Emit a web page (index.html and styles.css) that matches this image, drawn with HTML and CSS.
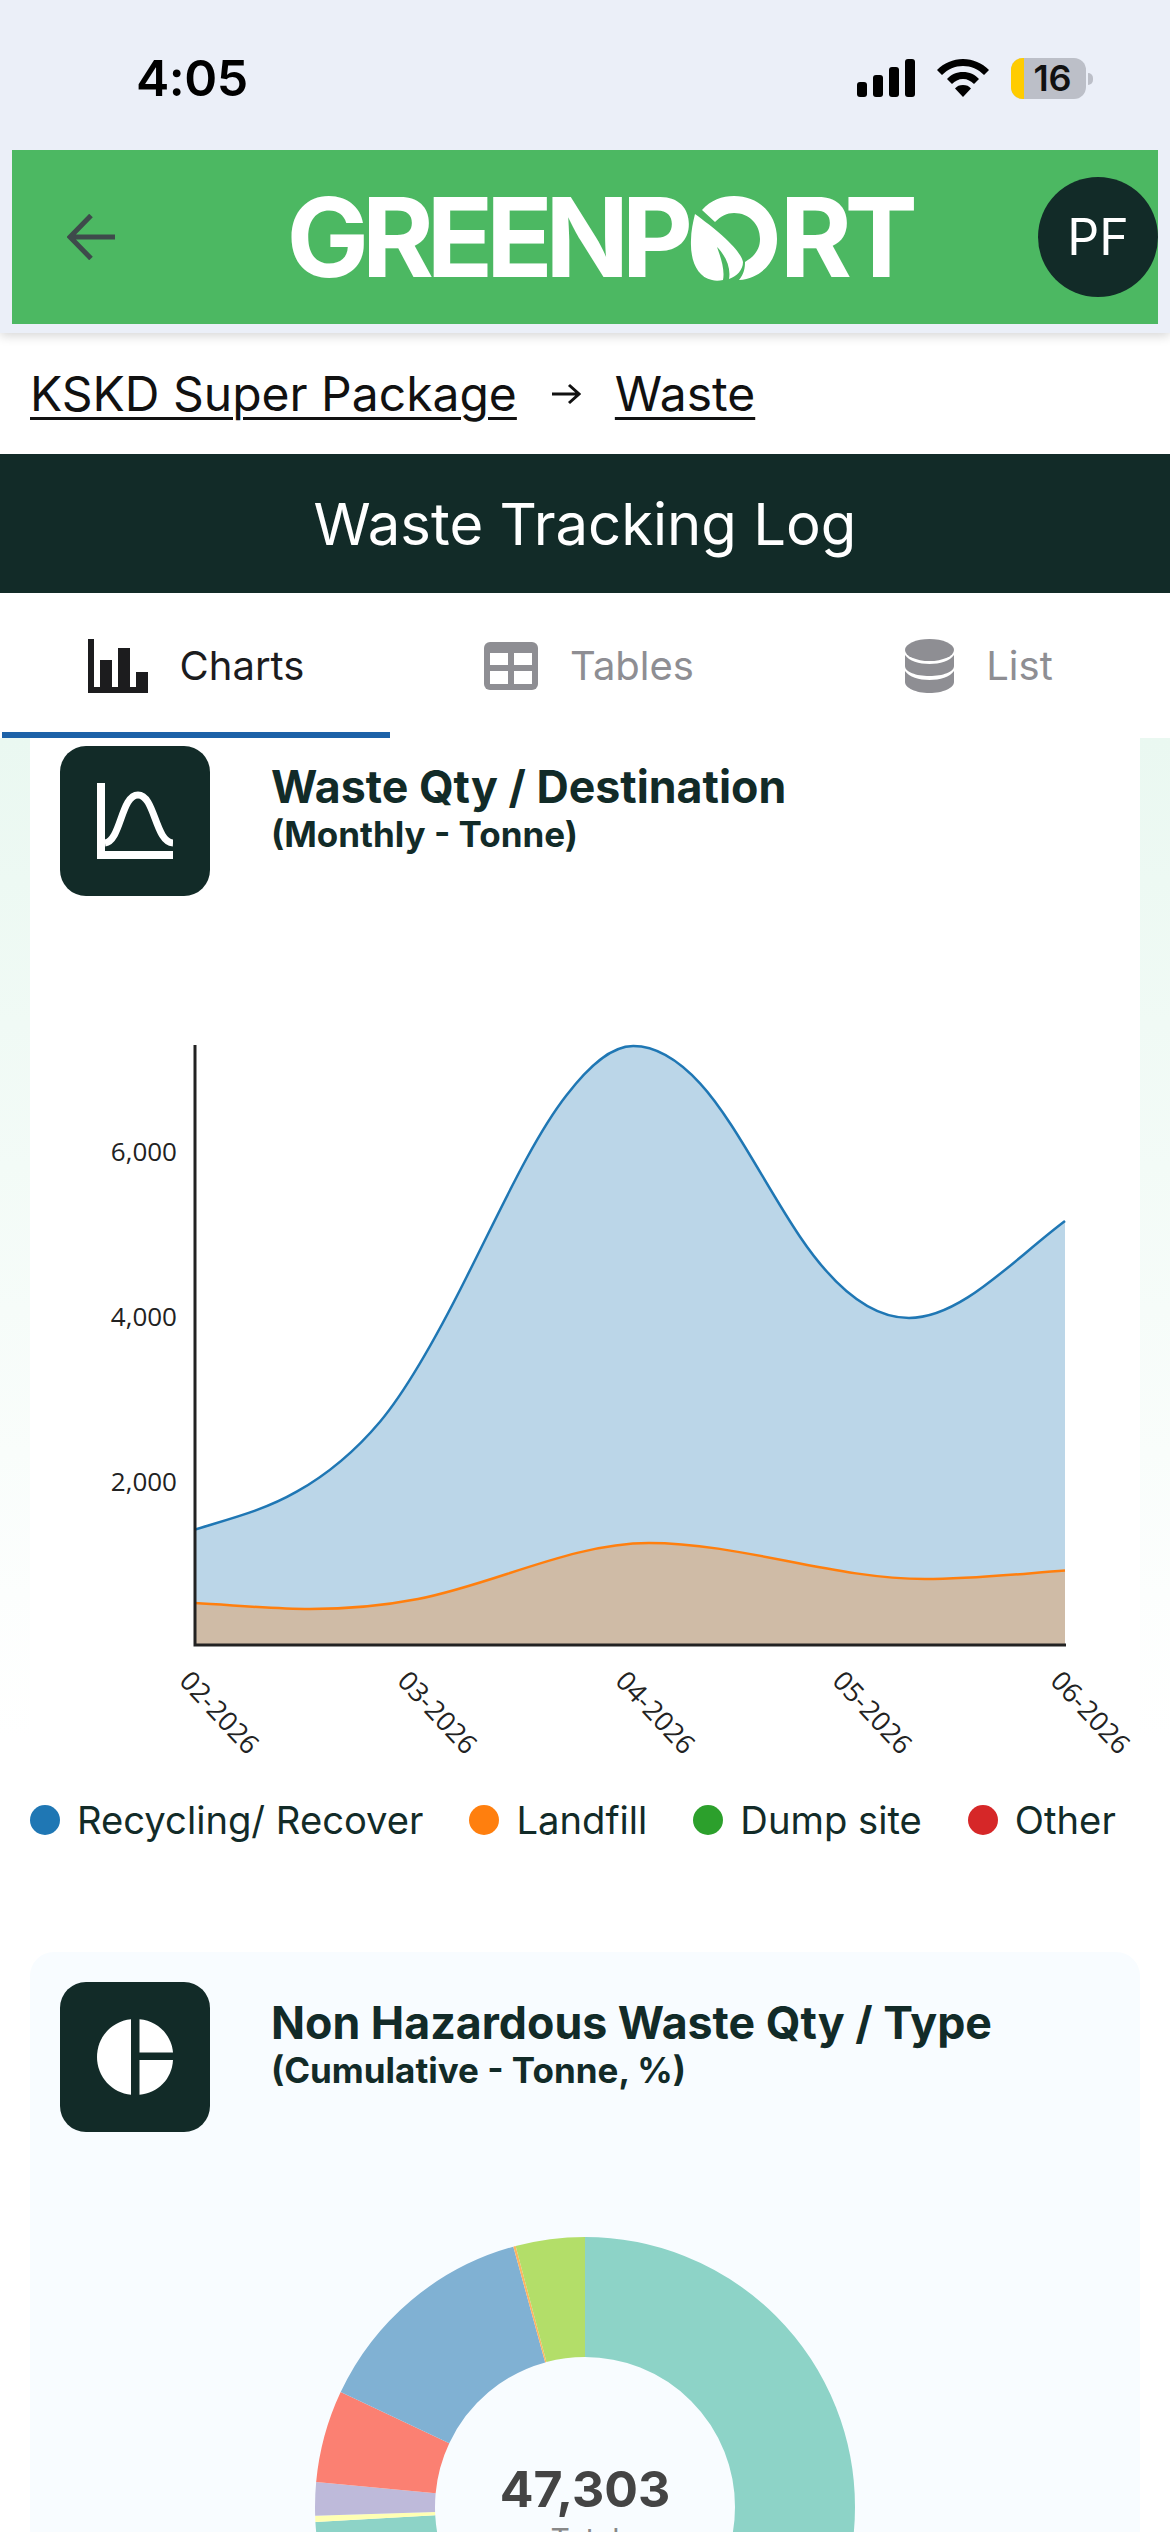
FILE: index.html
```html
<!DOCTYPE html>
<html lang="en">
<head>
<meta charset="utf-8">
<title>Waste Tracking Log</title>
<link rel="stylesheet" href="styles.css">
</head>
<body>
<header class="top">
  <div class="status">
    <span class="time">4:05</span>
    <div class="status-icons">
      <svg class="signal" width="58" height="38" viewBox="0 0 58 38"><rect x="0" y="23" width="10" height="15" rx="3"/><rect x="16" y="16" width="10" height="22" rx="3"/><rect x="32" y="8" width="10" height="30" rx="3"/><rect x="48" y="0" width="10" height="38" rx="3"/></svg>
      <svg class="wifi" width="52" height="38" viewBox="0 0 52 38"><path d="M26 0C16 0 7 4 0 11l5 5C11 10 18 7 26 7s15 3 21 9l5-5C45 4 36 0 26 0z"/><path d="M26 13c-6.500 0-12 2.500-16 7l5 5c3-3 6.500-5 11-5s8 2 11 5l5-5c-4-4.500-9.500-7-16-7z"/><path d="M26 26c-3.500 0-6 1-8 3.500L26 38l8-8.500C32 27 29.500 26 26 26z"/></svg>
      <div class="battery"><span class="battery-level"></span><span class="battery-num">16</span><span class="battery-nub"></span></div>
    </div>
  </div>
  <div class="brand">
    <svg class="back" width="48" height="46" viewBox="0 0 48 46"><path d="M48 23H5M24 1.500 3 23l21 21.500" fill="none" stroke="#3E4A4B" stroke-width="5"/></svg>
    <div class="logo">
      <span>GREENP</span>
      <svg class="logo-o" width="90" height="90" viewBox="695 190 90 90"><path fill="#fff" d="M709 208C718 198 729 194 741 194 766 194 784 212 784 237 784 258 770 276 746 278 751 272 752 266 752 260 762 254 767 247 767 237 767 222 756 211 741 211 734 211 728 214 722 220z"/><path fill="#fff" d="M702 212C724 228 748 248 750 260 750 268 744 274 736 277 738 266 733 254 724 245 728 256 732 268 730 278 726 279 722 279 719 278 704 275 697 258 698 238 698 229 700 220 702 212z"/></svg>
      <span>RT</span>
    </div>
    <div class="avatar">PF</div>
  </div>
</header>

<nav class="crumbs">
  <a class="crumb">KSKD Super Package</a>
  <svg class="crumb-arrow" width="30" height="22" viewBox="0 0 30 22"><path d="M1 11h27M18 2l10 9-10 9" fill="none" stroke="#111" stroke-width="3"/></svg>
  <a class="crumb">Waste</a>
</nav>

<h1 class="page-title">Waste Tracking Log</h1>

<div class="tabs">
  <div class="tab tab-active">
    <svg width="60" height="54" viewBox="0 0 60 54" fill="#1C1C1E"><path d="M0 0h6v48h6V21h12v27h6V9h12v39h6V33h12v21H0z"/></svg>
    <span>Charts</span>
  </div>
  <div class="tab">
    <svg width="54" height="48" viewBox="0 0 54 48"><rect width="54" height="48" rx="6" fill="#8E8E93"/><g fill="#fff"><rect x="6" y="11" width="18" height="12"/><rect x="30" y="11" width="18" height="12"/><rect x="6" y="29" width="18" height="13"/><rect x="30" y="29" width="18" height="13"/></g></svg>
    <span>Tables</span>
  </div>
  <div class="tab">
    <svg width="49" height="54" viewBox="0 0 49 54" fill="#8E8E93"><ellipse cx="24.500" cy="11" rx="24.500" ry="11"/><path d="M0 16c4 6 14 9 24.500 9S45 22 49 16v11c0 6-11 10-24.500 10S0 33 0 27z"/><path d="M0 32c4 6 14 9 24.500 9S45 38 49 32v11c0 6-11 11-24.500 11S0 49 0 43z"/></svg>
    <span>List</span>
  </div>
</div>

<main class="content">
  <section class="card card-plain">
    <div class="card-head">
      <div class="card-icon">
        <svg width="76" height="76" viewBox="0 0 76 76"><path d="M4 0v72h72" fill="none" stroke="#fff" stroke-width="8"/><path d="M8 60C24 58 24 12 41 12C58 12 58 59 76 60" fill="none" stroke="#fff" stroke-width="7"/></svg>
      </div>
      <div class="card-text">
        <h2>Waste Qty / Destination</h2>
        <p>(Monthly - Tonne)</p>
      </div>
    </div>
    <svg class="area-chart" width="1110" height="874" viewBox="30 896 1110 874">
      <path class="area-blue" d="M195 1529.500C229 1519 263 1511 296.700 1491.700C324.500 1476 352 1455 380 1421.700C409 1387 438 1334 466.700 1276.700C500 1211 533 1138 566.700 1095C589 1066 611 1046 633.300 1046C655.500 1046 678 1059.500 700 1083.300C733 1119 767 1188 800 1236.700C836 1290 873 1318 909 1318C961 1318 1013 1260 1065 1221V1645H195z"/>
      <path class="line-blue" d="M195 1529.500C229 1519 263 1511 296.700 1491.700C324.500 1476 352 1455 380 1421.700C409 1387 438 1334 466.700 1276.700C500 1211 533 1138 566.700 1095C589 1066 611 1046 633.300 1046C655.500 1046 678 1059.500 700 1083.300C733 1119 767 1188 800 1236.700C836 1290 873 1318 909 1318C961 1318 1013 1260 1065 1221"/>
      <path class="area-orange" d="M195 1603C233 1605 272 1609 310 1609C346 1609 382 1606 418 1599C495 1584 572 1543 649 1543C741 1543 833 1579 925 1579C972 1579 1018 1574 1065 1570.500V1645H195z"/>
      <path class="line-orange" d="M195 1603C233 1605 272 1609 310 1609C346 1609 382 1606 418 1599C495 1584 572 1543 649 1543C741 1543 833 1579 925 1579C972 1579 1018 1574 1065 1570.500"/>
      <path class="axis" d="M195 1045V1645H1066"/>
      <g class="tick-y">
        <text x="177" y="1161">6,000</text>
        <text x="177" y="1326">4,000</text>
        <text x="177" y="1491">2,000</text>
      </g>
      <g class="tick-x">
        <text transform="translate(178 1682) rotate(47)">02-2026</text>
        <text transform="translate(396 1682) rotate(47)">03-2026</text>
        <text transform="translate(614 1682) rotate(47)">04-2026</text>
        <text transform="translate(831 1682) rotate(47)">05-2026</text>
        <text transform="translate(1049 1682) rotate(47)">06-2026</text>
      </g>
    </svg>
  </section>

  <ul class="legend">
    <li><i class="dot dot-blue"></i>Recycling/ Recover</li>
    <li><i class="dot dot-orange"></i>Landfill</li>
    <li><i class="dot dot-green"></i>Dump site</li>
    <li><i class="dot dot-red"></i>Other</li>
  </ul>

  <section class="card card-tint">
    <div class="card-head">
      <div class="card-icon">
        <svg width="76" height="76" viewBox="0 0 76 76" fill="#fff"><path d="M34 .3V75.700C15 74 0 58 0 38S15 2 34 .3z"/><path d="M42.500 .3C61 2 74.500 16 76 33.500H42.500z"/><path d="M42.500 41H76C75 60 61 74 42.500 75.700z"/></svg>
      </div>
      <div class="card-text">
        <h2>Non Hazardous Waste Qty / Type</h2>
        <p>(Cumulative - Tonne, %)</p>
      </div>
    </div>
    <svg class="donut" width="1110" height="420" viewBox="30 2132 1110 420">
      <g class="donut-ring" transform="rotate(-90 585 2507)">
        <circle class="seg" cx="585" cy="2507" r="210" pathLength="360" stroke="#8DD3C7" stroke-dasharray="266.800 360"/>
        <circle class="seg" cx="585" cy="2507" r="210" pathLength="360" stroke="#FFFFB3" stroke-dasharray="1.300 360" stroke-dashoffset="-266.800"/>
        <circle class="seg" cx="585" cy="2507" r="210" pathLength="360" stroke="#BEBADA" stroke-dasharray="7.200 360" stroke-dashoffset="-268.100"/>
        <circle class="seg" cx="585" cy="2507" r="210" pathLength="360" stroke="#FB8072" stroke-dasharray="19.900 360" stroke-dashoffset="-275.300"/>
        <circle class="seg" cx="585" cy="2507" r="210" pathLength="360" stroke="#80B1D3" stroke-dasharray="49.400 360" stroke-dashoffset="-295.200"/>
        <circle class="seg" cx="585" cy="2507" r="210" pathLength="360" stroke="#FDB462" stroke-dasharray="0.500 360" stroke-dashoffset="-344.600"/>
        <circle class="seg" cx="585" cy="2507" r="210" pathLength="360" stroke="#B3DE69" stroke-dasharray="14.900 360" stroke-dashoffset="-345.100"/>
      </g>
      <text class="donut-value" x="585" y="2507">47,303</text>
      <text class="donut-label" x="585" y="2550">Total</text>
    </svg>
  </section>
</main>
</body>
</html>
```
FILE: styles.css
```css
* { box-sizing: border-box; }
html, body { margin: 0; padding: 0; }
body {
  width: 1170px;
  height: 2532px;
  overflow: hidden;
  background: #fff;
  font-family: "Inter", "Liberation Sans", sans-serif;
  color: #122B28;
}

.top {
  position: relative;
  height: 333px;
  padding: 0 12px;
  background: #EBEFF8;
  box-shadow: 0 3px 10px rgba(0, 0, 0, .16);
}
.status {
  height: 150px;
  display: flex;
  align-items: center;
  justify-content: space-between;
  padding: 6px 72px 0 124px;
}
.time { font-size: 50px; font-weight: 600; color: #000; letter-spacing: -.5px; }
.status-icons { display: flex; align-items: center; gap: 22px; }
.signal, .wifi { display: block; fill: #000; }
.battery {
  position: relative;
  width: 75px;
  height: 41px;
  border-radius: 12px;
  background: #BCBFC8;
  display: flex;
  align-items: center;
  justify-content: center;
}
.battery-level {
  position: absolute;
  left: 0; top: 0; bottom: 0;
  width: 13px;
  background: #FFCC00;
  border-radius: 12px 0 0 12px;
}
.battery-num { position: relative; font-size: 36px; font-weight: 600; color: #111; padding-left: 8px; }
.battery-nub {
  position: absolute;
  right: -7px; top: 15px;
  width: 5px; height: 12px;
  background: #BCBFC8;
  border-radius: 0 6px 6px 0;
}

.brand {
  position: relative;
  height: 174px;
  background: #4CB862;
  display: flex;
  align-items: center;
  justify-content: space-between;
  padding-left: 55px;
}
.back { display: block; }
.logo {
  display: flex;
  align-items: center;
  gap: 2px;
  margin-left: 44px;
  font-family: "Inter", sans-serif;
  font-weight: 700;
  font-size: 110px;
  line-height: 84px;
  letter-spacing: -7.400px;
  color: #fff;
}
.logo-o { display: block; flex: none; }
.avatar {
  width: 120px;
  height: 120px;
  border-radius: 50%;
  background: #122B28;
  color: #fff;
  font-size: 50px;
  display: flex;
  align-items: center;
  justify-content: center;
}

.crumbs {
  height: 121px;
  display: flex;
  align-items: center;
  padding: 0 30px;
  gap: 34px;
  font-size: 48px;
  color: #111;
}
.crumb { text-decoration: underline; text-decoration-thickness: 3px; text-underline-offset: 6px; }
.crumb-arrow { display: block; }

.page-title {
  margin: 0;
  height: 139px;
  background: #122B28;
  color: #fff;
  font-size: 58px;
  font-weight: 400;
  display: flex;
  align-items: center;
  justify-content: center;
}

.tabs { display: grid; grid-template-columns: repeat(3, 390px); height: 145px; }
.tab {
  display: flex;
  align-items: center;
  justify-content: center;
  gap: 32px;
  font-size: 40px;
  color: #8E8E93;
  padding-left: 8px;
}
.tab-active {
  color: #1C1C1E;
  border-bottom: 6px solid #1D62A8;
  margin-left: 2px;
  padding-top: 6px;
  padding-left: 0;
}

.content {
  padding: 0 30px;
  height: 1794px;
  background: linear-gradient(#EAF8F1 0, #FFFFFF 1000px);
}
.card-plain { background: #fff; height: 1032px; padding-top: 8px; }
.card-tint { background: #F8FCFF; border-radius: 24px; margin-top: 85px; padding-top: 30px; }
.card-head { display: flex; gap: 61px; margin-left: 30px; height: 150px; }
.card-icon {
  width: 150px;
  height: 150px;
  border-radius: 26px;
  background: #122B28;
  display: flex;
  align-items: center;
  justify-content: center;
  flex: none;
}
.card-text { padding-top: 13px; }
.card-text h2 { margin: 0; font-size: 44.700px; line-height: 56px; font-weight: 700; color: #122B28; }
.card-text p { margin: 0; font-size: 35px; line-height: 38px; font-weight: 700; color: #122B28; }

.area-chart, .donut { display: block; }
.area-blue { fill: #1F77B4; fill-opacity: .3; }
.area-orange { fill: #FF7F0E; fill-opacity: .3; }
.line-blue { fill: none; stroke: #1F77B4; stroke-width: 2.500; }
.line-orange { fill: none; stroke: #FF7F0E; stroke-width: 2.500; }
.axis { fill: none; stroke: #222; stroke-width: 3; }
.tick-y text, .tick-x text { font-family: "Open Sans", sans-serif; fill: #222; font-size: 26px; }
.tick-x text { font-size: 27px; }
.tick-y text { text-anchor: end; }

.legend {
  list-style: none;
  margin: 0;
  padding: 27px 0 0;
  height: 97px;
  display: flex;
  gap: 46px;
  font-size: 38.200px;
  color: #122B28;
}
.legend li { display: flex; align-items: center; gap: 17px; height: 46px; white-space: nowrap; }
.dot { width: 30px; height: 30px; border-radius: 50%; display: block; flex: none; }
.dot-blue { background: #1F77B4; }
.dot-orange { background: #FF7F0E; }
.dot-green { background: #2CA02C; }
.dot-red { background: #D62728; }

.seg { fill: none; stroke-width: 120; }
.donut-value { font-size: 50px; font-weight: 700; fill: #444; text-anchor: middle; }
.donut-label { font-size: 30px; fill: #888; text-anchor: middle; }
```
